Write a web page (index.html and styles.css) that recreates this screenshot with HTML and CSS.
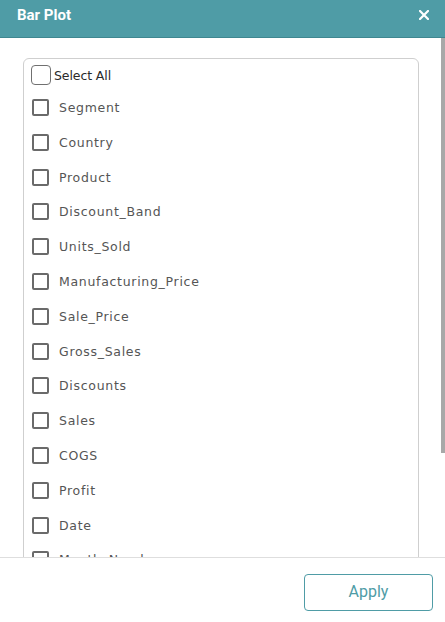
FILE: index.html
```html
<!DOCTYPE html>
<html>
<head>
<meta charset="utf-8">
<link rel="stylesheet" href="styles.css">
</head>
<body>
<div class="modal">
  <div class="header">
    <span class="title">Bar Plot</span>
    <svg class="close" width="10" height="10" viewBox="0 0 10 10"><path d="M1 1L9 9M9 1L1 9" stroke="#fff" stroke-width="2.2" stroke-linecap="square"/></svg>
  </div>
  <div class="body">
    <div class="scroller">
      <div class="list">
        <label class="all"><span class="box box-all"></span><span class="all-text">Select All</span></label>
        <label class="item"><span class="box"></span><span class="text">Segment</span></label>
        <label class="item"><span class="box"></span><span class="text">Country</span></label>
        <label class="item"><span class="box"></span><span class="text">Product</span></label>
        <label class="item"><span class="box"></span><span class="text">Discount_Band</span></label>
        <label class="item"><span class="box"></span><span class="text">Units_Sold</span></label>
        <label class="item"><span class="box"></span><span class="text">Manufacturing_Price</span></label>
        <label class="item"><span class="box"></span><span class="text">Sale_Price</span></label>
        <label class="item"><span class="box"></span><span class="text">Gross_Sales</span></label>
        <label class="item"><span class="box"></span><span class="text">Discounts</span></label>
        <label class="item"><span class="box"></span><span class="text">Sales</span></label>
        <label class="item"><span class="box"></span><span class="text">COGS</span></label>
        <label class="item"><span class="box"></span><span class="text">Profit</span></label>
        <label class="item"><span class="box"></span><span class="text">Date</span></label>
        <label class="item"><span class="box"></span><span class="text">Month_Number</span></label>
        <label class="item"><span class="box"></span><span class="text">Month_Name</span></label>
        <label class="item"><span class="box"></span><span class="text">Year</span></label>
      </div>
    </div>
    <div class="track"><div class="thumb"></div></div>
  </div>
  <div class="footer">
    <button class="apply">Apply</button>
  </div>
</div>
</body>
</html>
```
FILE: styles.css
```css
html, body {
  margin: 0;
  padding: 0;
  background: #fff;
}
.modal {
  width: 445px;
  height: 622px;
  display: flex;
  flex-direction: column;
  overflow: hidden;
}
.header {
  flex: none;
  height: 38px;
  box-sizing: border-box;
  background: #4f9ca6;
  border-bottom: 1px solid #3f8790;
  display: flex;
  align-items: center;
  justify-content: space-between;
  padding: 0 16px 0 17px;
  color: #fff;
  font-family: Roboto, "Liberation Sans", sans-serif;
}
.title {
  font-weight: 700;
  font-size: 15px;
  margin-top: -7px;
}
.close {
  margin-top: -7px;
}
.body {
  flex: 1;
  min-height: 0;
  display: flex;
}
.scroller {
  flex: 1;
  overflow: hidden;
  padding: 20px 22px 20px 23px;
}
.track {
  width: 4px;
  flex: none;
}
.thumb {
  height: 415px;
  background: #a8a8a8;
}
.list {
  border: 1px solid #cfcfcf;
  border-radius: 6px;
  padding: 6px 7px 12px 7px;
  font-family: "DejaVu Sans", sans-serif;
  font-size: 12.5px;
}
.all {
  display: flex;
  align-items: center;
  height: 20px;
  margin-bottom: 14px;
}
.item {
  display: flex;
  align-items: center;
  height: 17px;
  margin-left: 1px;
  margin-bottom: 17.8px;
}
.box {
  width: 17px;
  height: 17px;
  box-sizing: border-box;
  border: 2px solid #6a6a6a;
  border-radius: 2px;
  flex: none;
}
.box-all {
  width: 20px;
  height: 20px;
  border: 1.5px solid #707070;
  border-radius: 4px;
}
.all-text {
  margin-left: 3px;
  color: #2a2a2a;
  letter-spacing: -0.1px;
}
.text {
  margin-left: 10px;
  color: #555;
  letter-spacing: 0.7px;
}
.footer {
  flex: none;
  height: 65px;
  box-sizing: border-box;
  border-top: 1px solid #dedede;
  display: flex;
  justify-content: flex-end;
  align-items: flex-start;
  padding: 16px 12px 0 0;
}
.apply {
  width: 129px;
  height: 37px;
  background: #fff;
  border: 1.5px solid #4f9ca6;
  border-radius: 4px;
  color: #4f9ca6;
  font-family: Roboto, "Liberation Sans", sans-serif;
  font-size: 16px;
  padding: 0 0 2px 0;
}
```
